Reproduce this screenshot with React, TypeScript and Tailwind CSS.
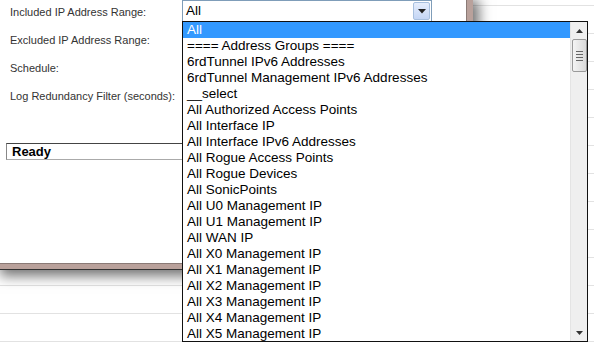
import React from "react";

const options = [
  "All",
  "==== Address Groups ====",
  "6rdTunnel IPv6 Addresses",
  "6rdTunnel Management IPv6 Addresses",
  "__select",
  "All Authorized Access Points",
  "All Interface IP",
  "All Interface IPv6 Addresses",
  "All Rogue Access Points",
  "All Rogue Devices",
  "All SonicPoints",
  "All U0 Management IP",
  "All U1 Management IP",
  "All WAN IP",
  "All X0 Management IP",
  "All X1 Management IP",
  "All X2 Management IP",
  "All X3 Management IP",
  "All X4 Management IP",
  "All X5 Management IP",
];

const labels = [
  "Included IP Address Range:",
  "Excluded IP Address Range:",
  "Schedule:",
  "Log Redundancy Filter (seconds):",
];

export default function App() {
  return (
    <div className="relative w-[594px] h-[345px] overflow-hidden bg-white">
      {/* table rows behind the dialog */}
      <div className="flex flex-col">
        <div className="h-[6px] border-b border-[#e2e2e2]" />
        {Array.from({ length: 12 }).map((_, i) => (
          <div key={i} className="h-[28px] border-b border-[#e2e2e2]" />
        ))}
      </div>

      {/* dialog window */}
      <div className="absolute left-0 top-0 flex flex-col shadow-[3px_3px_12px_3px_rgba(0,0,0,0.55)]">
        <div className="flex">
          <div className="w-[466px] h-[263px] bg-white font-['Liberation_Sans',Arial,sans-serif] text-[11px] text-[#333]">
            <div className="flex flex-col mt-[-2px] pl-[10px]">
              {labels.map((l) => (
                <div key={l} className="h-[28px] flex items-center">
                  {l}
                </div>
              ))}
            </div>
            <div className="mt-[33px] ml-[6px] w-[440px] h-[17px] border-t border-t-[#444] border-b border-b-[#aaa] border-l border-l-[#888] flex items-center pl-[5px] font-['Liberation_Sans',Arial,sans-serif] font-bold text-[13px] text-black">
              Ready
            </div>
          </div>
          <div className="w-[7px] bg-[#b9a19b] border-l border-[#8a7a76]" />
        </div>
        <div className="h-[7px] w-[473px] bg-[#b9a19b] border-t border-[#8a7a76] border-b border-b-[#333]" />
      </div>

      {/* select */}
      <div className="absolute left-[182px] top-0 w-[250px] h-[22px] flex border border-[#7f9db9] bg-white font-['Liberation_Sans',Arial,sans-serif] text-[13.5px] text-black">
        <div className="flex-1 flex items-center pl-[3px]">All</div>
        <div className="w-[17px] m-[1px] flex items-center justify-center rounded-[2px] border border-[#a8c0de] bg-gradient-to-b from-[#e6eefc] to-[#c4d6f5]">
          <svg width="8" height="5" viewBox="0 0 8 5">
            <path d="M0 0h8L4 4.5z" fill="#222" />
          </svg>
        </div>
      </div>

      {/* dropdown list */}
      <div className="absolute left-[182px] top-[21px] w-[406px] h-[321px] flex border border-[#111] bg-white font-['Liberation_Sans',Arial,sans-serif] text-[13.5px] leading-[16px] text-black">
        <div className="flex-1 flex flex-col">
          {options.map((o, i) => (
            <div
              key={o}
              className={
                i === 0
                  ? "h-[16px] pl-[4px] bg-[#3399ff] text-white whitespace-nowrap"
                  : "h-[16px] pl-[4px] whitespace-nowrap"
              }
            >
              {o}
            </div>
          ))}
        </div>
        <div className="w-[17px] flex flex-col items-center bg-[#efefef] border-l border-[#e4e4e4]">
          <div className="h-[17px] flex items-center justify-center">
            <svg width="7" height="4" viewBox="0 0 7 4">
              <path d="M3.5 0L7 4H0z" fill="#333" />
            </svg>
          </div>
          <div className="w-[15px] h-[33px] rounded-[2px] border border-[#9a9a9a] bg-gradient-to-r from-[#f4f4f4] to-[#d9d9d9] flex flex-col items-center justify-center gap-[2px]">
            <div className="w-[7px] h-px bg-[#666]" />
            <div className="w-[7px] h-px bg-[#666]" />
            <div className="w-[7px] h-px bg-[#666]" />
            <div className="w-[7px] h-px bg-[#666]" />
          </div>
          <div className="flex-1" />
          <div className="h-[17px] flex items-center justify-center">
            <svg width="7" height="4" viewBox="0 0 7 4">
              <path d="M0 0h7L3.5 4z" fill="#333" />
            </svg>
          </div>
        </div>
      </div>
    </div>
  );
}
